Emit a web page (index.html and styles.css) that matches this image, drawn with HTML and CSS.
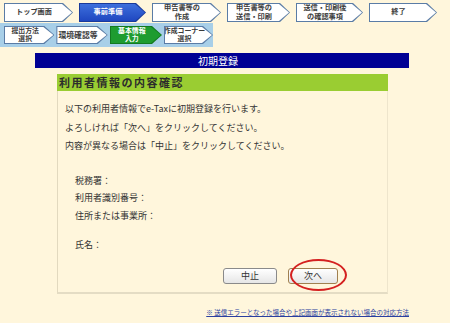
FILE: index.html
```html
<!DOCTYPE html>
<html lang="ja">
<head>
<meta charset="utf-8">
<title>初期登録</title>
<link rel="stylesheet" href="styles.css">
</head>
<body>
<div class="steps-top">
  <div class="step"><div class="step-in">トップ画面</div></div>
  <div class="step active-blue"><div class="step-in">事前準備</div></div>
  <div class="step"><div class="step-in">申告書等の<br>作成</div></div>
  <div class="step"><div class="step-in">申告書等の<br>送信・印刷</div></div>
  <div class="step"><div class="step-in">送信・印刷後<br>の確認事項</div></div>
  <div class="step"><div class="step-in">終了</div></div>
</div>
<div class="steps-sub">
  <div class="step small"><div class="step-in">提出方法<br>選択</div></div>
  <div class="step small"><div class="step-in single">環境確認等</div></div>
  <div class="step small active-green"><div class="step-in">基本情報<br>入力</div></div>
  <div class="step small"><div class="step-in">作成コーナー<br>選択</div></div>
</div>

<div class="title-bar">初期登録</div>

<div class="panel">
  <div class="panel-head">利用者情報の内容確認</div>
  <div class="panel-body">
    <p class="intro">以下の利用者情報でe-Taxに初期登録を行います。<br>よろしければ「次へ」をクリックしてください。<br>内容が異なる場合は「中止」をクリックしてください。</p>
    <ul class="fields">
      <li>税務署：</li>
      <li>利用者識別番号：</li>
      <li>住所または事業所：</li>
      <li class="name">氏名：</li>
    </ul>
    <div class="buttons">
      <button class="btn" type="button">中止</button>
      <div class="next-wrap">
        <button class="btn btn-next" type="button">次へ</button>
        <span class="circle"></span>
      </div>
    </div>
  </div>
</div>

<div class="footer"><a href="#">※ 送信エラーとなった場合や上記画面が表示されない場合の対応方法</a></div>
</body>
</html>
```

FILE: styles.css
```css
html, body {
  margin: 0;
  padding: 0;
}
body {
  width: 450px;
  height: 323px;
  overflow: hidden;
  background: #fff6dc;
  font-family: "Noto Sans CJK JP", "Noto Sans", sans-serif;
  color: #333;
}

/* step navigation */
.steps-top {
  display: flex;
  gap: 6px;
  padding: 3px 0 0 4px;
  height: 19px;
}
.steps-top .step { height: 19px; }
.steps-top .step:nth-child(1) { width: 69px; }
.steps-top .step:nth-child(2) { width: 67px; }
.steps-top .step:nth-child(3) { width: 69px; }
.steps-top .step:nth-child(4) { width: 63px; }
.steps-top .step:nth-child(5) { width: 67px; }
.steps-top .step:nth-child(6) { width: 68px; }

.step {
  padding: 1px;
  box-sizing: border-box;
  background: #5a7ca6;
  clip-path: polygon(0 0, calc(100% - 10px) 0, 100% 50%, calc(100% - 10px) 100%, 0 100%);
}
.step-in {
  height: 100%;
  box-sizing: border-box;
  background: #fff;
  clip-path: polygon(0 0, calc(100% - 10px) 0, 100% 50%, calc(100% - 10px) 100%, 0 100%);
  display: flex;
  align-items: center;
  justify-content: center;
  padding-right: 9px;
  text-align: center;
  font-family: "Liberation Sans", "Noto Sans CJK JP", sans-serif;
  font-size: 7.2px;
  line-height: 8.5px;
  font-weight: bold;
  color: #3a3a3a;
  white-space: nowrap;
}
.active-blue { background: #1a3a9a; }
.active-blue .step-in {
  background: linear-gradient(#3d6fdc, #1f47c0);
  color: #fff;
}

.steps-sub {
  margin-top: 1px;
  width: 213px;
  height: 24px;
  background: #a8cfe8;
  display: flex;
  align-items: center;
  gap: 2px;
  padding-left: 4px;
  box-sizing: border-box;
}
.step.small { height: 18px; }
.steps-sub .step:nth-child(1) { width: 51px; }
.steps-sub .step:nth-child(2) { width: 52px; }
.steps-sub .step:nth-child(3) { width: 53px; }
.steps-sub .step:nth-child(4) { width: 49px; }
.step.small .step-in {
  font-size: 6.9px;
  line-height: 8px;
  padding-right: 8px;
}
.step.small .step-in.single {
  font-size: 7.8px;
  line-height: 9px;
}
.active-green { background: #137a20; }
.active-green .step-in {
  background: #1e9c30;
  color: #fff;
}

/* title */
.title-bar {
  margin: 6px 0 0 35px;
  width: 374px;
  height: 15px;
  background: #000094;
  color: #fff;
  font-size: 10px;
  line-height: 15px;
  text-align: center;
  padding-right: 8px;
  box-sizing: border-box;
}

/* panel */
.panel {
  margin: 6px 0 0 57px;
  width: 331px;
  height: 220px;
  box-sizing: border-box;
  border-left: 1px solid #e2d9bf;
  border-bottom: 2px solid #e4dcc4;
  border-right: 1px solid #eee5cc;
  display: flex;
  flex-direction: column;
}
.panel-head {
  height: 17px;
  background: #9acd32;
  font-size: 11px;
  line-height: 17px;
  font-weight: bold;
  letter-spacing: 1.5px;
  color: #2c2c2c;
  padding-left: 2px;
  margin-left: -1px;
  margin-right: -1px;
}
.panel-body {
  flex: 1;
  display: flex;
  flex-direction: column;
  padding: 9px 0 8px 7px;
}
.intro {
  margin: 0;
  font-size: 9px;
  line-height: 18.5px;
  color: #333;
}
.fields {
  list-style: none;
  margin: 16px 0 0;
  padding: 0 0 0 10px;
  font-size: 9px;
  line-height: 17.5px;
  color: #333;
}
.fields .name { margin-top: 12px; }

.buttons {
  margin-top: auto;
  display: flex;
  justify-content: flex-end;
  gap: 11px;
  padding-right: 49px;
}
.btn {
  width: 54px;
  height: 16px;
  padding: 0;
  border: 1px solid #8a8a8a;
  border-radius: 3px;
  background: linear-gradient(#ffffff, #e6e6e6);
  font-family: "Noto Sans CJK JP", sans-serif;
  font-size: 9px;
  line-height: 14px;
  color: #333;
}
.btn-next {
  width: 50px;
  border-color: #a08050;
}
.next-wrap {
  position: relative;
  display: flex;
}
.circle {
  position: absolute;
  left: 2px;
  top: -9px;
  width: 57px;
  height: 32px;
  border: 2px solid #d42020;
  border-radius: 50%;
  box-sizing: border-box;
}

.footer {
  margin-top: 14px;
  width: 409px;
  text-align: right;
  font-size: 6.5px;
  line-height: 8px;
}
.footer a {
  color: #2a3fa0;
  text-decoration: underline;
}
```
